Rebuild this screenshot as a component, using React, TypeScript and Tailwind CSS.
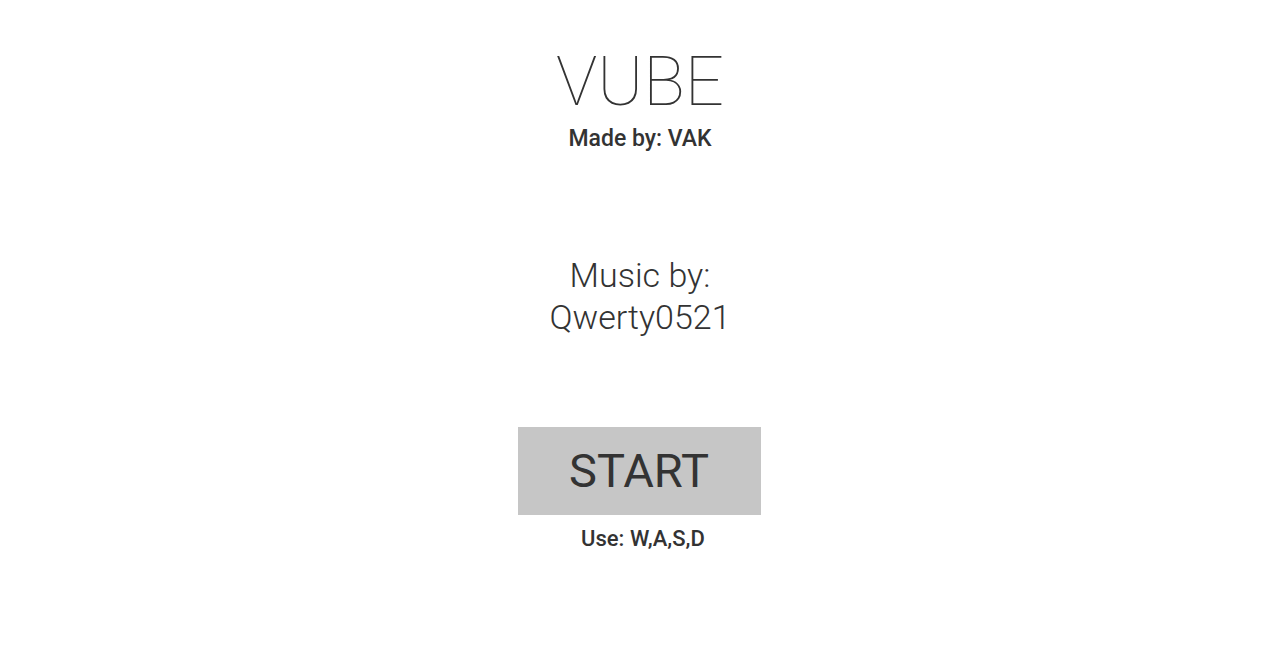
import React from 'react';

const App: React.FC = () => {
  return (
    <div className="w-full h-[663px] bg-white flex flex-col items-center text-[#333333]" style={{ fontFamily: 'Roboto, sans-serif' }}>
      <h1 className="mt-[40px] text-[69px] font-thin leading-[84px]">VUBE</h1>
      <p className="mt-[2px] text-[23px] font-medium leading-[26px]">Made by: VAK</p>
      <div className="mt-[102px] flex flex-col items-center text-[34px] font-light leading-[42px]">
        <span>Music by:</span>
        <span>Qwerty0521</span>
      </div>
      <button className="mt-[89px] w-[243px] h-[88px] bg-[#c6c6c6] text-[47px] font-normal text-[#333333] -translate-x-[1px]">START</button>
      <p className="mt-[11px] text-[22px] font-medium leading-[26px] translate-x-[3px]">Use: W,A,S,D</p>
    </div>
  );
};

export default App;
